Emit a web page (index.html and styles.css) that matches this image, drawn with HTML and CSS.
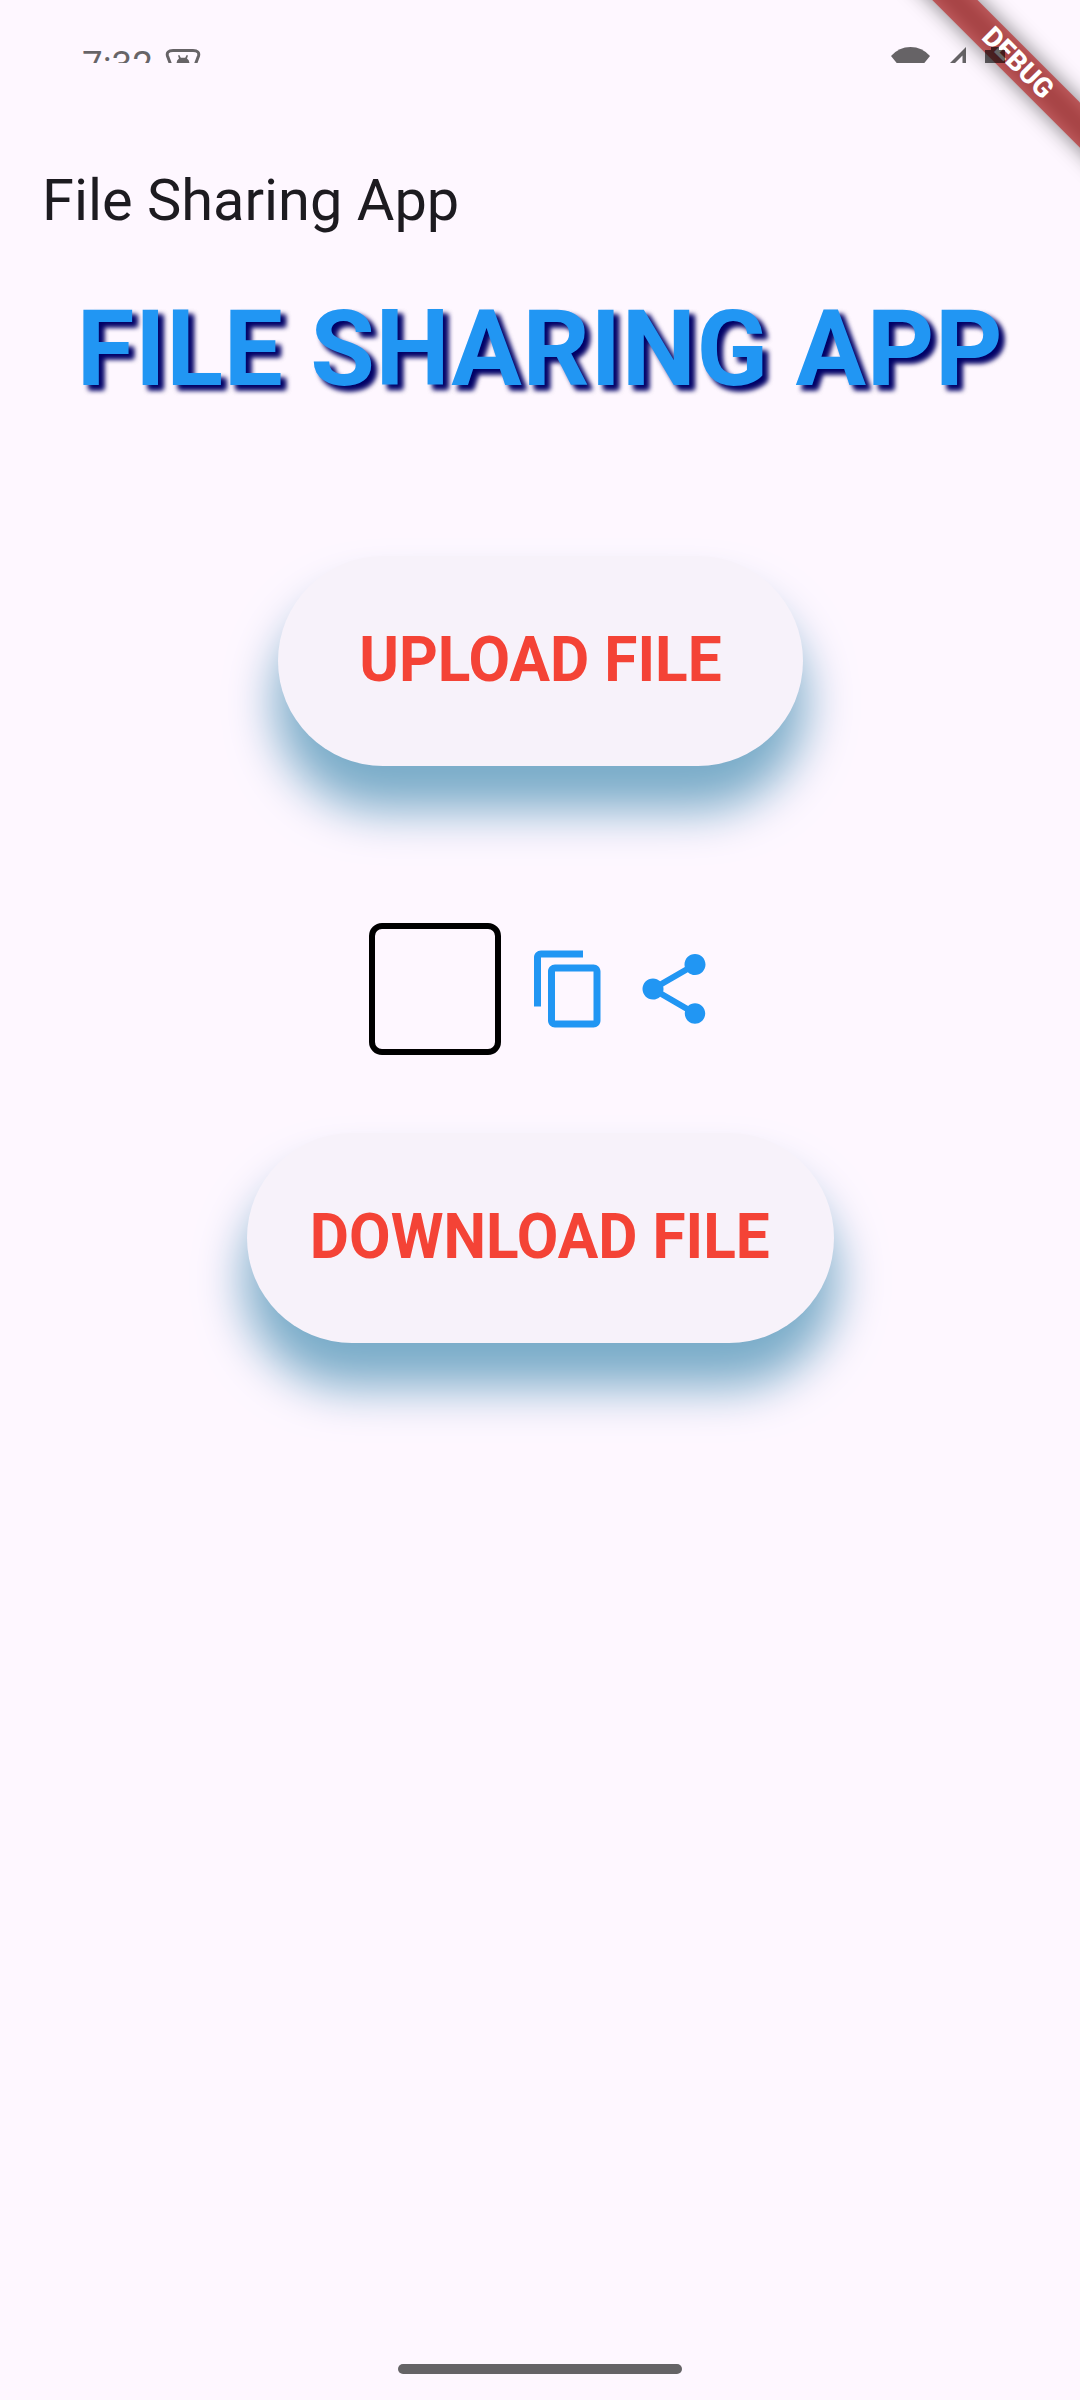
FILE: index.html
```html
<!DOCTYPE html>
<html lang="en">
<head>
<meta charset="utf-8">
<title>File Sharing App</title>
<link rel="stylesheet" href="styles.css">
</head>
<body>
<div class="screen">
  <div class="status-bar">
    <div class="status-left">
      <span class="clock">7:32</span>
      <svg class="badge" width="36" height="36" viewBox="0 0 36 36">
        <path class="badge-line" d="M8 2.600H28Q35 2.600 33.500 8L30.500 16Q27 29 18 33Q9 29 5.500 16L2.500 8Q1 2.600 8 2.600Z"/>
        <path d="M11.500 16Q11.500 12 14 10.500L13 7.500L14.300 7L15.800 9.700H20.200L21.700 7L23 7.500L22 10.500Q24.500 12 24.500 16Z"/>
      </svg>
    </div>
    <div class="status-right">
      <svg width="39" height="36" viewBox="0 0 39 36"><path d="M0 9Q8 0 19.500 0T39 9L19.500 33Z"/></svg>
      <svg width="32" height="36" viewBox="0 0 32 36"><path fill-rule="evenodd" d="M32 0V32H0ZM28.500 8.500V28.500H8.500Z"/></svg>
      <svg width="20" height="36" viewBox="0 0 20 36"><path d="M0 3H6V0H14V3H20V34H0Z"/></svg>
    </div>
  </div>
  <header class="app-bar">File Sharing App</header>
  <main class="content">
    <h1 class="headline">FILE SHARING APP</h1>
    <button class="pill upload"><span>UPLOAD FILE</span></button>
    <div class="code-row">
      <div class="code-box"></div>
      <svg class="icon" viewBox="0 0 24 24"><path d="M16 1H4c-1.100 0-2 .9-2 2v14h2V3h12V1zm3 4H8c-1.100 0-2 .9-2 2v14c0 1.100.9 2 2 2h11c1.100 0 2-.9 2-2V7c0-1.100-.9-2-2-2zm0 16H8V7h11v14z"/></svg>
      <svg class="icon" viewBox="0 0 24 24"><path d="M18 16.080c-.76 0-1.440.3-1.960.77L8.910 12.700c.05-.23.09-.46.09-.7s-.04-.47-.09-.7l7.050-4.110c.54.5 1.250.81 2.040.81 1.660 0 3-1.340 3-3s-1.340-3-3-3-3 1.340-3 3c0 .24.04.47.09.7L8.040 9.810C7.500 9.310 6.790 9 6 9c-1.660 0-3 1.340-3 3s1.340 3 3 3c.79 0 1.500-.31 2.040-.81l7.120 4.160c-.05.21-.08.43-.08.65 0 1.610 1.310 2.920 2.920 2.920s2.920-1.310 2.920-2.920-1.310-2.920-2.920-2.920z"/></svg>
    </div>
    <button class="pill download"><span>DOWNLOAD FILE</span></button>
  </main>
  <div class="home-handle"></div>
  <div class="debug-banner"><span>DEBUG</span></div>
</div>
</body>
</html>
```
FILE: styles.css
```css
* { box-sizing: border-box; }
body { margin: 0; font-family: Roboto, sans-serif; }
.screen {
  position: relative;
  display: flex;
  flex-direction: column;
  width: 1080px;
  height: 2400px;
  overflow: hidden;
  background: #fef7ff;
}
.status-bar {
  z-index: 2;
  display: flex;
  justify-content: space-between;
  height: 63px;
  padding: 47px 75px 0 82px;
  overflow: hidden;
  color: rgba(0, 0, 0, .6);
}
.status-bar path { fill: currentColor; }
.status-bar .badge-line { fill: none; stroke: currentColor; stroke-width: 3px; }
.status-left { display: flex; align-items: flex-start; gap: 12px; }
.clock { font-size: 36.750px; line-height: 36px; }
.badge { flex: none; margin-top: 1px; }
.status-right { display: flex; gap: 4px; }
.status-right svg:last-child { margin-left: 15px; }
.app-bar {
  height: 225px;
  padding: 104px 42px 0;
  color: #1d1b20;
  font-size: 57.750px;
  line-height: 66px;
}
.content { display: flex; flex-direction: column; align-items: center; }
.headline {
  margin: 0 0 145px;
  color: #2196f3;
  font-size: 105px;
  font-weight: 700;
  letter-spacing: .656px;
  line-height: 123px;
  white-space: nowrap;
  text-shadow: 5.250px 5.250px 5px #000066, 5.250px 5.250px 5px rgba(0, 0, 102, .5);
}
.pill {
  height: 210px;
  padding: 0 0 3px;
  border: 0;
  border-radius: 105px;
  background: #f7f2fa;
  box-shadow: 0 41px 47px 3px #7aacc9;
  color: #f44336;
  font-family: inherit;
  font-size: 62.400px;
  font-weight: 700;
  white-space: nowrap;
}
.pill span { display: inline-block; transform: scaleX(.967); }
.upload { width: 525px; }
.download { width: 587px; }
.code-row { display: flex; align-items: center; gap: 21px; margin: 157px 0 78px 4px; }
.code-box {
  width: 132px;
  height: 132px;
  margin-right: 5px;
  border: 6px solid #000;
  border-radius: 13px;
}
.icon { width: 84px; height: 84px; fill: #2196f3; }
.home-handle {
  width: 284px;
  height: 10px;
  margin: auto auto 26px;
  border-radius: 5px;
  background: #656366;
}
.debug-banner {
  position: absolute;
  top: 47px;
  left: 868px;
  width: 300px;
  height: 31.500px;
  transform: rotate(45deg);
  color: #fff;
  font-size: 27.500px;
  font-weight: 800;
  line-height: 31.500px;
  text-align: center;
}
.debug-banner::before {
  content: "";
  position: absolute;
  inset: 0;
  background: rgba(0, 0, 0, .5);
  filter: blur(10.400px);
}
.debug-banner span { position: absolute; inset: 0; background: rgba(183, 28, 28, .63); }
```
